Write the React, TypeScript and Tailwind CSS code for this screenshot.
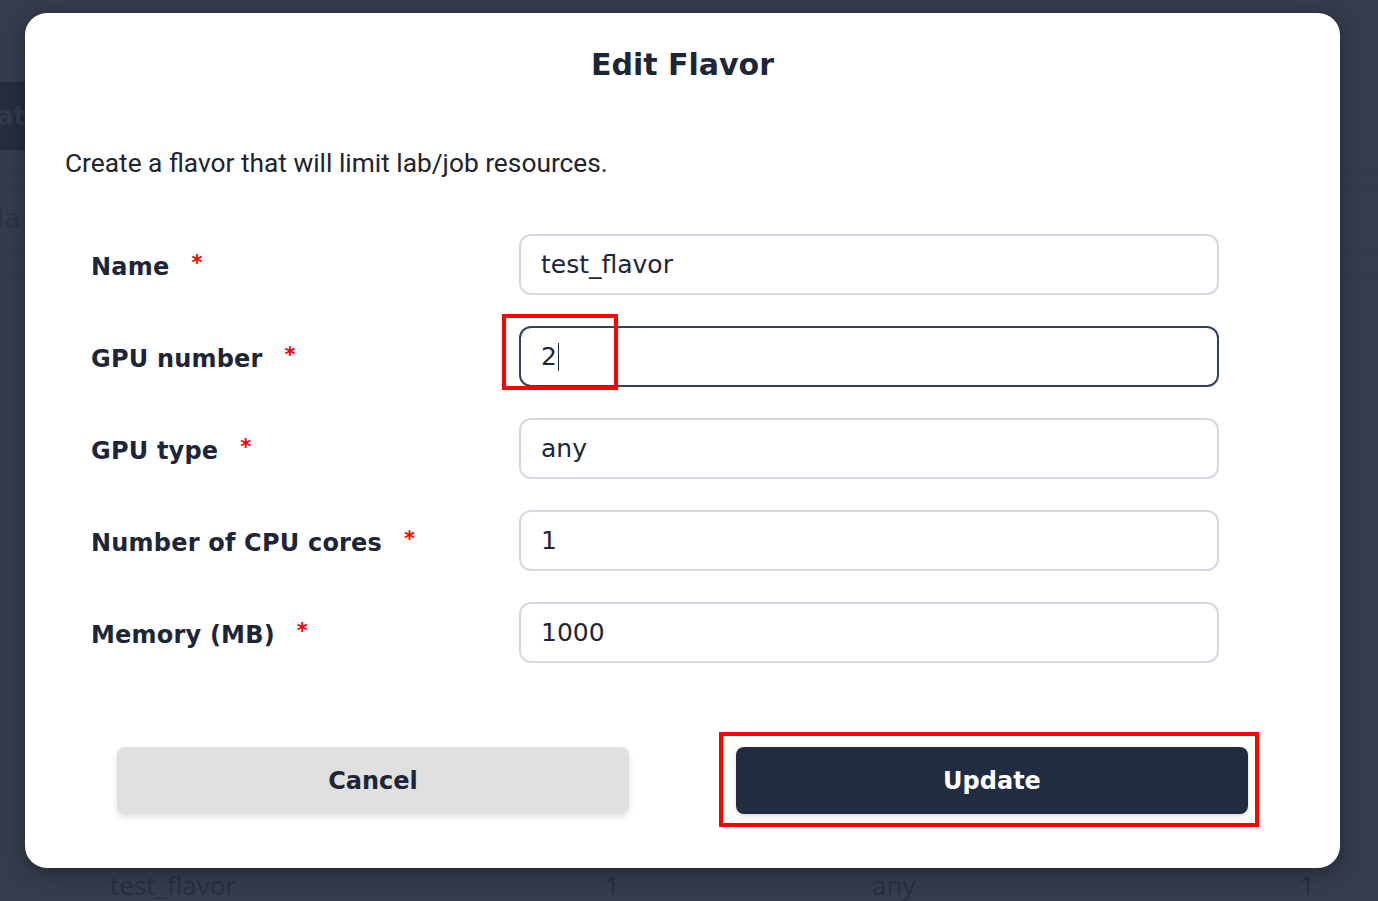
import { useState } from "react";

const fields = [
  { label: "Name", value: "test_flavor" },
  { label: "GPU number", value: "2", focused: true },
  { label: "GPU type", value: "any" },
  { label: "Number of CPU cores", value: "1" },
  { label: "Memory (MB)", value: "1000" },
];

const EditFlavor = () => {
  const [values] = useState(fields);

  return (
    <div className="min-h-screen w-full bg-[#363c4d] relative overflow-hidden font-['DejaVu_Sans',sans-serif]">
      {/* Page behind the modal (dimmed) */}
      <div className="pt-[82px]">
        <div className="h-[68px] w-[60px] bg-[#262d3e] flex items-center text-[26px] font-bold text-[#323a4d]">
          <span className="-ml-[4px]">at</span>
        </div>
        <div className="h-[25px] border-b border-[#30374a]"></div>
        <div className="h-[15px] border-b border-[#30374a]"></div>
        <div className="h-[60px] border-b border-[#30374a] flex items-center text-[26px] text-[#2c3345]">
          <span className="-ml-[3px]">la</span>
        </div>
        <div className="h-[28px] border-b border-[#30374a]"></div>
      </div>
      <div className="absolute left-0 right-0 top-[868px] h-[35px] flex items-center text-[26px] text-[#282e3d] font-['Open_Sans',sans-serif]">
        <span className="ml-[110px] w-[495px]">test_flavor</span>
        <span className="w-[267px]">1</span>
        <span className="w-[428px]">any</span>
        <span>1</span>
      </div>

      {/* Modal */}
      <div className="absolute left-[25px] top-[13px] w-[1315px] h-[855px] bg-white rounded-[22px] shadow-[0_4px_20px_rgba(0,0,0,0.35)] px-[40px] pt-[32px]">
        <h2 className="text-center text-[30px] leading-[40px] font-bold text-[#1d2638]">
          Edit Flavor
        </h2>

        <p className="mt-[62px] text-[26.3px] leading-[32px] text-[#20242c] font-['Roboto',sans-serif]">
          Create a flavor that will limit lab/job resources.
        </p>

        <div className="mt-[55px] ml-[26px] grid grid-cols-[428px_700px] gap-y-[31px]">
          {values.map((f) => (
            <div key={f.label} className="contents">
              <div className="flex items-center h-[61px] pt-[5px]">
                <span className="text-[24px] font-bold text-[#1d2638] tracking-[0.2px]">
                  {f.label}
                </span>
                <span className="ml-[22px] -mt-[6px] text-[21px] font-bold text-[#ff0000]">*</span>
              </div>
              <div
                className={
                  f.focused
                    ? "relative h-[61px] rounded-[12px] border-2 border-[#33435e] flex items-center pl-[20px] text-[25px] text-[#1d2638]"
                    : "relative h-[61px] rounded-[12px] border-2 border-[#d4d8e2] flex items-center pl-[20px] text-[25px] text-[#1d2638]"
                }
              >
                <span>{f.value}</span>
                {f.focused && (
                  <>
                    <span className="ml-[1px] w-[1.5px] h-[28px] bg-[#1d2638]"></span>
                    <div className="absolute -left-[19px] -top-[14px] w-[116px] h-[76px] border-[4px] border-[#ff0000]"></div>
                  </>
                )}
              </div>
            </div>
          ))}
        </div>

        <div className="mt-[84px] flex justify-center gap-[107px]">
          <button className="w-[512px] h-[67px] rounded-[8px] bg-[#e0e0e0] shadow-[0_3px_6px_rgba(0,0,0,0.12)] text-[24px] font-bold text-[#1d2638]">
            Cancel
          </button>
          <div className="relative">
            <button className="w-[512px] h-[67px] rounded-[8px] bg-[#222c40] shadow-[0_2px_4px_rgba(0,0,0,0.15)] text-[24px] font-bold text-white">
              Update
            </button>
            <div className="absolute -left-[17px] -top-[15px] w-[540px] h-[95px] border-[4px] border-[#ff0000]"></div>
          </div>
        </div>
      </div>
    </div>
  );
};

export default function App() {
  return <EditFlavor />;
}
